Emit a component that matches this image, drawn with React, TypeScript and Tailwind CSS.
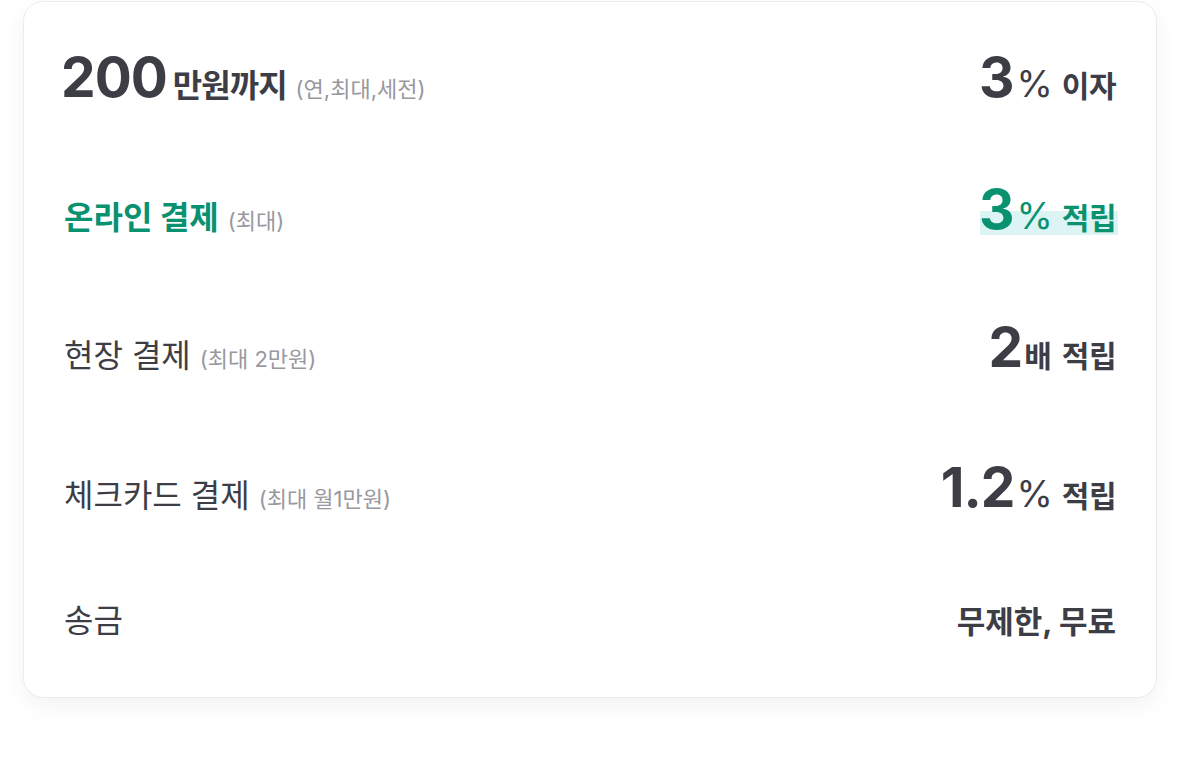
import React from 'react';

const font = { fontFamily: "Inter, 'Noto Sans CJK KR', sans-serif" };

const Note: React.FC<{ children: React.ReactNode }> = ({ children }) => (
  <span className="ml-[9px] text-[22px] font-normal leading-none text-[#98989f]">{children}</span>
);

const App: React.FC = () => {
  return (
    <div className="w-[1180px] h-[760px] bg-white" style={font}>
      <div className="ml-[23px] mt-px w-[1134px] h-[697px] rounded-[20px] border border-[#ebebf0] bg-white shadow-[0_8px_24px_rgba(0,0,0,0.05)] px-10 pt-[48px] text-[#3d3d46]">
        {/* row 1 */}
        <div className="flex items-baseline justify-between h-[64px]">
          <div className="flex items-baseline">
            <span className="-ml-[3px] text-[55px] font-bold leading-none tracking-[-1px]">200</span>
            <span className="ml-[6px] text-[32px] font-bold leading-none tracking-[-1px]">만원까지</span>
            <Note>(연,최대,세전)</Note>
          </div>
          <div className="flex items-baseline">
            <span className="text-[55px] font-bold leading-none">3</span>
            <span className="ml-[2px] text-[37px] font-normal leading-none">%</span>
            <span className="ml-[9px] text-[30px] font-bold leading-none tracking-[-0.5px]">이자</span>
          </div>
        </div>

        {/* row 2 */}
        <div className="flex items-baseline justify-between h-[64px] mt-[68px]">
          <div className="flex items-baseline">
            <span className="text-[32px] font-bold leading-none text-[#0a9270]">온라인 결제</span>
            <Note>(최대)</Note>
          </div>
          <div className="relative flex items-baseline text-[#0a9270]">
            <span className="absolute left-[1px] -right-[2px] bottom-[2px] h-[24px] bg-[#ddf4f4]" />
            <span className="relative text-[55px] font-bold leading-none">3</span>
            <span className="relative ml-[2px] text-[37px] font-normal leading-none">%</span>
            <span className="relative ml-[9px] text-[30px] font-bold leading-none tracking-[-0.5px]">적립</span>
          </div>
        </div>

        {/* row 3 */}
        <div className="flex items-baseline justify-between h-[64px] mt-[74px]">
          <div className="flex items-baseline">
            <span className="text-[32px] font-normal leading-none">현장 결제</span>
            <Note>(최대 2만원)</Note>
          </div>
          <div className="flex items-baseline">
            <span className="text-[55px] font-bold leading-none">2</span>
            <span className="ml-[1px] text-[30px] font-bold leading-none">배</span>
            <span className="ml-[10px] text-[30px] font-bold leading-none tracking-[-0.5px]">적립</span>
          </div>
        </div>

        {/* row 4 */}
        <div className="flex items-baseline justify-between h-[64px] mt-[76px]">
          <div className="flex items-baseline">
            <span className="text-[32px] font-normal leading-none">체크카드 결제</span>
            <Note>(최대 월1만원)</Note>
          </div>
          <div className="flex items-baseline">
            <span className="text-[55px] font-bold leading-none tracking-[-1px]">1.2</span>
            <span className="ml-[2px] text-[37px] font-normal leading-none">%</span>
            <span className="ml-[9px] text-[30px] font-bold leading-none tracking-[-0.5px]">적립</span>
          </div>
        </div>

        {/* row 5 */}
        <div className="flex items-center justify-between h-[64px] mt-[65px]">
          <span className="text-[32px] font-normal leading-none">송금</span>
          <span className="text-[31px] font-bold leading-none">무제한, 무료</span>
        </div>
      </div>
    </div>
  );
};

export default App;
